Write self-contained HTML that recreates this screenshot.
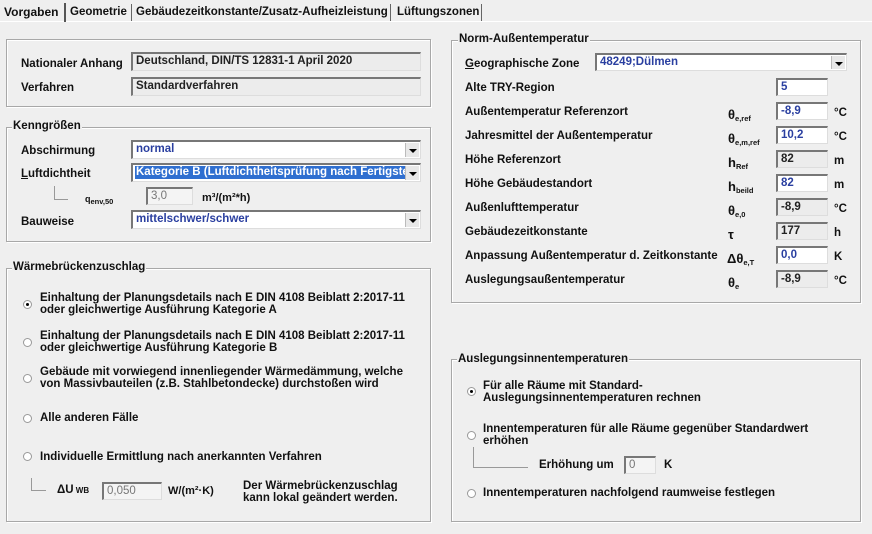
<!DOCTYPE html>
<html><head><meta charset="utf-8"><style>
body{margin:0;width:872px;height:534px;background:#efefef;position:relative;overflow:hidden;font-family:"Liberation Sans",Arial,sans-serif;font-weight:bold;font-size:11.5px;color:#111}
div,span{position:absolute}
.t{white-space:nowrap;line-height:13px}
.box{border:1px solid #a8a8a8;box-shadow:inset 1px 1px 0 #fff,1px 1px 0 #fff}
.lg{background:#efefef;padding:0 1px;line-height:13px}
.f{background:#fff;border-top:2px solid #777;border-left:2px solid #777;border-right:1px solid #ddd;border-bottom:1px solid #ddd;box-sizing:border-box;line-height:14px;padding-left:3px;color:#2a3fa0;white-space:nowrap;overflow:hidden}
.g{background:#ececec;color:#222}
.gr{color:#777;font-weight:normal}
.dd{right:1px;top:1px;width:13px;bottom:1px;background:#e8e8e8;border-left:1px solid #bbb}
.dd:after{content:"";position:absolute;left:3px;top:6px;border-left:4px solid transparent;border-right:4px solid transparent;border-top:4px solid #000}
.r{width:9px;height:9px;border-radius:50%;background:#fff;border:1px solid #999;box-sizing:border-box}
.r.on:after{content:"";position:absolute;left:2px;top:2px;width:3px;height:3px;border-radius:50%;background:#000}
sub{font-size:7.5px;vertical-align:-2px}
.sy{font-size:13px}
.tree{border-left:1px solid #999;border-bottom:1px solid #999}
</style></head><body>
<!-- tabs -->
<div style="left:0;top:21px;width:872px;height:1px;background:#fff"></div>
<div class="t" style="left:4px;top:6px;font-size:12px">Vorgaben</div>
<div style="left:64px;top:3px;width:2px;height:19px;background:#555"></div>
<div class="t" style="left:70px;top:6px;font-size:11.5px">Geometrie</div>
<div style="left:131px;top:4px;width:1px;height:17px;background:#666"></div>
<div class="t" style="left:136px;top:6px;font-size:11.5px">Gebäudezeitkonstante/Zusatz-Aufheizleistung</div>
<div style="left:390px;top:4px;width:1px;height:17px;background:#666"></div>
<div class="t" style="left:397px;top:6px;font-size:11.5px">Lüftungszonen</div>
<div style="left:481px;top:4px;width:1px;height:17px;background:#666"></div>

<!-- box 1 -->
<div class="box" style="left:6px;top:39px;width:423px;height:66px"></div>
<div class="t" style="left:21px;top:58px">Nationaler Anhang</div>
<div class="f g" style="left:131px;top:52px;width:290px;height:19px">Deutschland, DIN/TS 12831-1 April 2020</div>
<div class="t" style="left:21px;top:82px">Verfahren</div>
<div class="f g" style="left:131px;top:77px;width:290px;height:19px">Standardverfahren</div>

<!-- Kenngrößen -->
<div class="box" style="left:6px;top:127px;width:423px;height:113px"></div>
<div class="t lg" style="left:12px;top:120px">Kenngrößen</div>
<div class="t" style="left:21px;top:145px">Abschirmung</div>
<div class="f" style="left:131px;top:140px;width:290px;height:19px">normal<span class="dd"></span></div>
<div class="t" style="left:21px;top:168px"><u>L</u>uftdichtheit</div>
<div class="f" style="left:131px;top:163px;width:290px;height:19px;padding-left:2px"><span style="left:2px;top:1px;width:270px;height:13px;background:#2f6fd0;color:#fff;font-weight:bold;padding-left:1px;line-height:13px">Kategorie B (Luftdichtheitsprüfung nach Fertigste</span><span class="dd"></span></div>
<div class="tree" style="left:54px;top:186px;width:13px;height:13px"></div>
<div class="t" style="left:85px;top:193px;font-size:9px">q<sub>env,50</sub></div>
<div class="f gr" style="left:146px;top:187px;width:47px;height:18px;background:#f4f4f4">3,0</div>
<div class="t" style="left:202px;top:192px;font-size:11px">m³/(m²*h)</div>
<div class="t" style="left:21px;top:216px">Bauweise</div>
<div class="f" style="left:131px;top:210px;width:290px;height:19px">mittelschwer/schwer<span class="dd"></span></div>

<!-- Wärmebrückenzuschlag -->
<div class="box" style="left:6px;top:268px;width:423px;height:252px"></div>
<div class="t lg" style="left:12px;top:261px">Wärmebrückenzuschlag</div>
<div class="r on" style="left:23px;top:300px"></div>
<div class="t" style="left:40px;top:292px;line-height:12px">Einhaltung der Planungsdetails nach E DIN 4108 Beiblatt 2:2017-11<br>oder gleichwertige Ausführung Kategorie A</div>
<div class="r" style="left:23px;top:338px"></div>
<div class="t" style="left:40px;top:330px;line-height:12px">Einhaltung der Planungsdetails nach E DIN 4108 Beiblatt 2:2017-11<br>oder gleichwertige Ausführung Kategorie B</div>
<div class="r" style="left:23px;top:374px"></div>
<div class="t" style="left:40px;top:366px;line-height:12px">Gebäude mit vorwiegend innenliegender Wärmedämmung, welche<br>von Massivbauteilen (z.B. Stahlbetondecke) durchstoßen wird</div>
<div class="r" style="left:23px;top:414px"></div>
<div class="t" style="left:40px;top:412px">Alle anderen Fälle</div>
<div class="r" style="left:23px;top:452px"></div>
<div class="t" style="left:40px;top:451px">Individuelle Ermittlung nach anerkannten Verfahren</div>
<div class="tree" style="left:31px;top:478px;width:14px;height:12px"></div>
<div class="t" style="left:57px;top:484px">ΔU<span style="position:static;font-size:8px"> WB</span></div>
<div class="f gr" style="left:102px;top:482px;width:60px;height:18px;background:#f4f4f4">0,050</div>
<div class="t" style="left:168px;top:485px;font-size:11px">W/(m²·K)</div>
<div class="t" style="left:243px;top:480px;line-height:12px">Der Wärmebrückenzuschlag<br>kann lokal geändert werden.</div>

<!-- Norm-Außentemperatur -->
<div class="box" style="left:451px;top:40px;width:408px;height:261px"></div>
<div class="t lg" style="left:458px;top:33px">Norm-Außentemperatur</div>
<div class="t" style="left:465px;top:58px"><u>G</u>eographische Zone</div>
<div class="f" style="left:595px;top:53px;width:252px;height:18px">48249;Dülmen<span class="dd"></span></div>
<div class="t" style="left:465px;top:82px">Alte TRY-Region</div>
<div class="f" style="left:776px;top:78px;width:52px;height:18px">5</div>

<div class="t" style="left:465px;top:106px">Außentemperatur Referenzort</div>
<div class="t sy" style="left:728px;top:108px">θ<sub>e,ref</sub></div>
<div class="f" style="left:776px;top:102px;width:52px;height:18px">-8,9</div>
<div class="t" style="left:834px;top:107px">°C</div>

<div class="t" style="left:465px;top:130px">Jahresmittel der Außentemperatur</div>
<div class="t sy" style="left:728px;top:132px">θ<sub>e,m,ref</sub></div>
<div class="f" style="left:776px;top:126px;width:52px;height:18px">10,2</div>
<div class="t" style="left:834px;top:131px">°C</div>

<div class="t" style="left:465px;top:154px">Höhe Referenzort</div>
<div class="t sy" style="left:728px;top:156px">h<sub>Ref</sub></div>
<div class="f g" style="left:776px;top:150px;width:52px;height:18px">82</div>
<div class="t" style="left:834px;top:155px">m</div>

<div class="t" style="left:465px;top:178px">Höhe Gebäudestandort</div>
<div class="t sy" style="left:728px;top:180px">h<sub>beild</sub></div>
<div class="f" style="left:776px;top:174px;width:52px;height:18px">82</div>
<div class="t" style="left:834px;top:179px">m</div>

<div class="t" style="left:465px;top:202px">Außenlufttemperatur</div>
<div class="t sy" style="left:728px;top:204px">θ<sub>e,0</sub></div>
<div class="f g" style="left:776px;top:198px;width:52px;height:18px">-8,9</div>
<div class="t" style="left:834px;top:203px">°C</div>

<div class="t" style="left:465px;top:226px">Gebäudezeitkonstante</div>
<div class="t sy" style="left:728px;top:228px">τ</div>
<div class="f g" style="left:776px;top:222px;width:52px;height:18px">177</div>
<div class="t" style="left:834px;top:227px">h</div>

<div class="t" style="left:465px;top:250px">Anpassung Außentemperatur d. Zeitkonstante</div>
<div class="t sy" style="left:727px;top:252px">Δθ<sub>e,T</sub></div>
<div class="f" style="left:776px;top:246px;width:52px;height:18px">0,0</div>
<div class="t" style="left:834px;top:251px">K</div>

<div class="t" style="left:465px;top:274px">Auslegungsaußentemperatur</div>
<div class="t sy" style="left:728px;top:276px">θ<sub>e</sub></div>
<div class="f g" style="left:776px;top:270px;width:52px;height:18px">-8,9</div>
<div class="t" style="left:834px;top:275px">°C</div>

<!-- Auslegungsinnentemperaturen -->
<div class="box" style="left:451px;top:359px;width:408px;height:161px"></div>
<div class="t lg" style="left:457px;top:353px">Auslegungsinnentemperaturen</div>
<div class="r on" style="left:467px;top:387px"></div>
<div class="t" style="left:483px;top:380px;line-height:12px">Für alle Räume mit Standard-<br>Auslegungsinnentemperaturen rechnen</div>
<div class="r" style="left:467px;top:431px"></div>
<div class="t" style="left:483px;top:423px;line-height:12px">Innentemperaturen für alle Räume gegenüber Standardwert<br>erhöhen</div>
<div class="tree" style="left:473px;top:447px;width:54px;height:20px"></div>
<div class="t" style="left:539px;top:459px">Erhöhung um</div>
<div class="f gr" style="left:624px;top:456px;width:32px;height:18px;background:#f4f4f4">0</div>
<div class="t" style="left:664px;top:459px">K</div>
<div class="r" style="left:467px;top:489px"></div>
<div class="t" style="left:483px;top:487px">Innentemperaturen nachfolgend raumweise festlegen</div>
</body></html>
